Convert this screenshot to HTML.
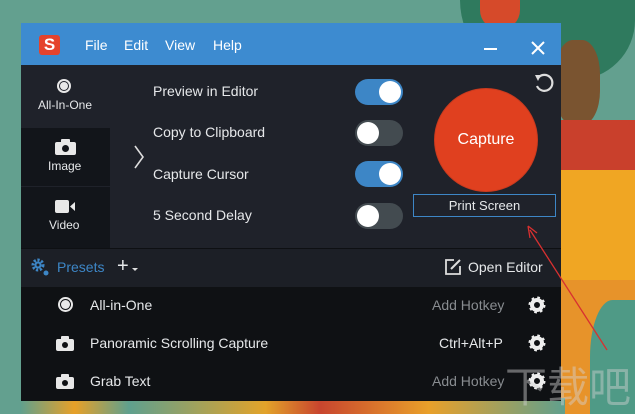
<!DOCTYPE html>
<html style="overflow:hidden;width:635px;height:414px"><head><style>
body{margin:0;width:635px;height:414px;overflow:hidden;background:#63a08f;font-family:"Liberation Sans",sans-serif;position:relative}
.a{position:absolute}
.t{color:#e6e8ea;font-size:14px;white-space:nowrap}
.tog{position:absolute;width:48px;height:26px;border-radius:13px}
.tog .k{position:absolute;top:2px;width:22px;height:22px;border-radius:50%;background:#fff}
.on{background:#3d86c6}.on .k{left:24px}
.off{background:#434b50}.off .k{left:2px}
</style></head><body>
<div class="a" style="left:460px;top:0;width:175px;height:80px;background:#2f7a5e;border-radius:0 0 60px 80px"></div>
<div class="a" style="left:480px;top:0;width:40px;height:30px;background:#d64a2a;border-radius:0 0 20px 20px"></div>
<div class="a" style="left:555px;top:40px;width:45px;height:85px;background:#7a5430;border-radius:40%"></div>
<div class="a" style="left:560px;top:120px;width:75px;height:60px;background:#c9402c"></div>
<div class="a" style="left:560px;top:170px;width:75px;height:110px;background:#f0a623"></div>
<div class="a" style="left:561px;top:280px;width:74px;height:134px;background:#e7932a"></div>
<div class="a" style="left:590px;top:300px;width:45px;height:114px;background:#4f9a86;border-radius:50% 0 0 0"></div>
<div class="a" style="left:20px;top:398px;width:545px;height:16px;background:linear-gradient(90deg,#5fa08e 0,#e7a028 10%,#5fa08e 20%,#e2a32a 45%,#c8452e 55%,#e9a02a 75%,#5fa08e 100%)"></div>

<div class="a" style="left:21px;top:23px;width:540px;height:42px;background:#3d8bd0"></div>
<div class="a" style="left:39px;top:35px;width:21px;height:20px;background:#e5432c;border-radius:3px;color:#fff;font-weight:bold;font-size:17px;text-align:center;line-height:20px">S</div>
<div class="a t" style="left:85px;top:37px;font-size:14px;color:#fff">File</div>
<div class="a t" style="left:124px;top:37px;font-size:14px;color:#fff">Edit</div>
<div class="a t" style="left:165px;top:37px;font-size:14px;color:#fff">View</div>
<div class="a t" style="left:213px;top:37px;font-size:14px;color:#fff">Help</div>
<div class="a" style="left:484px;top:48px;width:13px;height:2px;background:#fff"></div>
<svg class="a" style="left:531px;top:41px" width="14" height="14"><path d="M1 1L13 13M13 1L1 13" stroke="#fff" stroke-width="2"/></svg>

<div class="a" style="left:21px;top:65px;width:540px;height:183px;background:#1f222a"></div>
<div class="a" style="left:21px;top:128px;width:89px;height:58px;background:#12151a"></div>
<div class="a" style="left:21px;top:187px;width:89px;height:61px;background:#12151a"></div>
<div class="a" style="left:57px;top:79px;width:14px;height:14px;border:2px solid #e8e8e8;border-radius:50%;box-sizing:border-box"></div>
<div class="a" style="left:60px;top:82px;width:8px;height:8px;border-radius:50%;background:#e8e8e8"></div>
<div class="a t" style="left:38px;top:98px;font-size:12px">All-In-One</div>
<svg class="a" style="left:55px;top:139px" width="21" height="16"><rect x="0" y="3" width="21" height="13" rx="2" fill="#e8e8e8"/><rect x="6" y="0" width="9" height="4" rx="1" fill="#e8e8e8"/><circle cx="10.5" cy="9.5" r="3.5" fill="#12151a"/></svg>
<div class="a t" style="left:48px;top:159px;font-size:12px">Image</div>
<svg class="a" style="left:55px;top:200px" width="20" height="13"><rect x="0" y="0" width="14" height="13" rx="2" fill="#e8e8e8"/><path d="M15 6.5L20 2V11Z" fill="#e8e8e8"/></svg>
<div class="a t" style="left:49px;top:218px;font-size:12px">Video</div>
<svg class="a" style="left:133px;top:145px" width="12" height="24"><path d="M2 1L10 12L2 23" stroke="#ddd" stroke-width="1.6" fill="none"/></svg>

<div class="a t" style="left:153px;top:83px">Preview in Editor</div>
<div class="a t" style="left:153px;top:124px">Copy to Clipboard</div>
<div class="a t" style="left:153px;top:166px">Capture Cursor</div>
<div class="a t" style="left:153px;top:207px">5 Second Delay</div>
<div class="tog on" style="left:355px;top:79px"><div class="k"></div></div>
<div class="tog off" style="left:355px;top:120px"><div class="k"></div></div>
<div class="tog on" style="left:355px;top:161px"><div class="k"></div></div>
<div class="tog off" style="left:355px;top:203px"><div class="k"></div></div>
<svg class="a" style="left:533px;top:72px" width="22" height="22"><path d="M5 6A8 8 0 1 1 4 14" stroke="#ddd" stroke-width="2.2" fill="none"/><path d="M2 3L8 3L5 9Z" fill="#ddd"/></svg>
<div class="a" style="left:435px;top:89px;width:102px;height:102px;border-radius:50%;background:#e0401f;box-shadow:0 0 0 1px #c83a1f;color:#fff;font-size:16px;text-align:center;line-height:102px">Capture</div>
<div class="a" style="left:413px;top:194px;width:143px;height:23px;border:1px solid #3d86c6;box-sizing:border-box;color:#e6e8ea;font-size:13px;text-align:center;line-height:21px">Print Screen</div>

<div class="a" style="left:21px;top:248px;width:540px;height:39px;background:#1c1f26;border-top:1px solid #0e1013;box-sizing:border-box"></div>
<svg class="a" style="left:29px;top:256px" width="22" height="22"><circle cx="9" cy="9" r="5" fill="none" stroke="#3d86c6" stroke-width="3" stroke-dasharray="2.2 1.6"/><circle cx="9" cy="9" r="3.5" fill="#3d86c6"/><circle cx="9" cy="9" r="1.5" fill="#1c1f26"/><circle cx="17" cy="17" r="2.5" fill="#3d86c6"/></svg>
<div class="a t" style="left:57px;top:259px;color:#3d86c6">Presets</div>
<div class="a t" style="left:117px;top:255px;font-size:20px;color:#e6e8ea">+</div>
<div class="a" style="left:132px;top:268px;border:3px solid transparent;border-top:3px solid #ddd"></div>
<svg class="a" style="left:444px;top:258px" width="18" height="18"><path d="M10 2H2V16H16V8" stroke="#ddd" stroke-width="1.8" fill="none"/><path d="M7 11L16 2" stroke="#ddd" stroke-width="2"/></svg>
<div class="a t" style="left:468px;top:259px">Open Editor</div>

<div class="a" style="left:21px;top:287px;width:540px;height:114px;background:#0f1114"></div>
<div class="a" style="left:58px;top:297px;width:15px;height:15px;border:2px solid #e8e8e8;border-radius:50%;box-sizing:border-box"></div>
<div class="a" style="left:61px;top:300px;width:9px;height:9px;border-radius:50%;background:#e8e8e8"></div>
<div class="a t" style="left:90px;top:297px">All-in-One</div>
<svg class="a" style="left:56px;top:336px" width="18" height="15"><rect x="0" y="3" width="18" height="12" rx="2" fill="#e8e8e8"/><rect x="5" y="0" width="8" height="4" rx="1" fill="#e8e8e8"/><circle cx="9" cy="9" r="3" fill="#0f1114"/></svg>
<div class="a t" style="left:90px;top:335px">Panoramic Scrolling Capture</div>
<svg class="a" style="left:56px;top:374px" width="18" height="15"><rect x="0" y="3" width="18" height="12" rx="2" fill="#e8e8e8"/><rect x="5" y="0" width="8" height="4" rx="1" fill="#e8e8e8"/><circle cx="9" cy="9" r="3" fill="#0f1114"/></svg>
<div class="a t" style="left:90px;top:373px">Grab Text</div>
<div class="a t" style="left:432px;top:297px;color:#888c90">Add Hotkey</div>
<div class="a t" style="left:439px;top:335px">Ctrl+Alt+P</div>
<div class="a t" style="left:432px;top:373px;color:#888c90">Add Hotkey</div>
<svg class="a" style="left:528px;top:296px" width="18" height="18"><g fill="none" stroke="#eee"><circle cx="9" cy="9" r="5" stroke-width="4"/><circle cx="9" cy="9" r="7" stroke-width="3" stroke-dasharray="2.5 3"/></g></svg>
<svg class="a" style="left:528px;top:334px" width="18" height="18"><g fill="none" stroke="#eee"><circle cx="9" cy="9" r="5" stroke-width="4"/><circle cx="9" cy="9" r="7" stroke-width="3" stroke-dasharray="2.5 3"/></g></svg>
<svg class="a" style="left:528px;top:372px" width="18" height="18"><g fill="none" stroke="#eee"><circle cx="9" cy="9" r="5" stroke-width="4"/><circle cx="9" cy="9" r="7" stroke-width="3" stroke-dasharray="2.5 3"/></g></svg>

<svg class="a" style="left:0;top:0" width="635" height="414"><path d="M607 350L530 230" stroke="#d83030" stroke-width="1.3"/><path d="M528 226L530 238M528 226L537 233" stroke="#d83030" stroke-width="1.3"/></svg>
<div class="a" style="left:505px;top:360px;width:130px;white-space:nowrap;overflow:hidden;color:rgba(210,210,210,0.45);font-size:42px;line-height:50px;font-family:'Noto Sans CJK SC',sans-serif">下载吧</div>
</body></html>
